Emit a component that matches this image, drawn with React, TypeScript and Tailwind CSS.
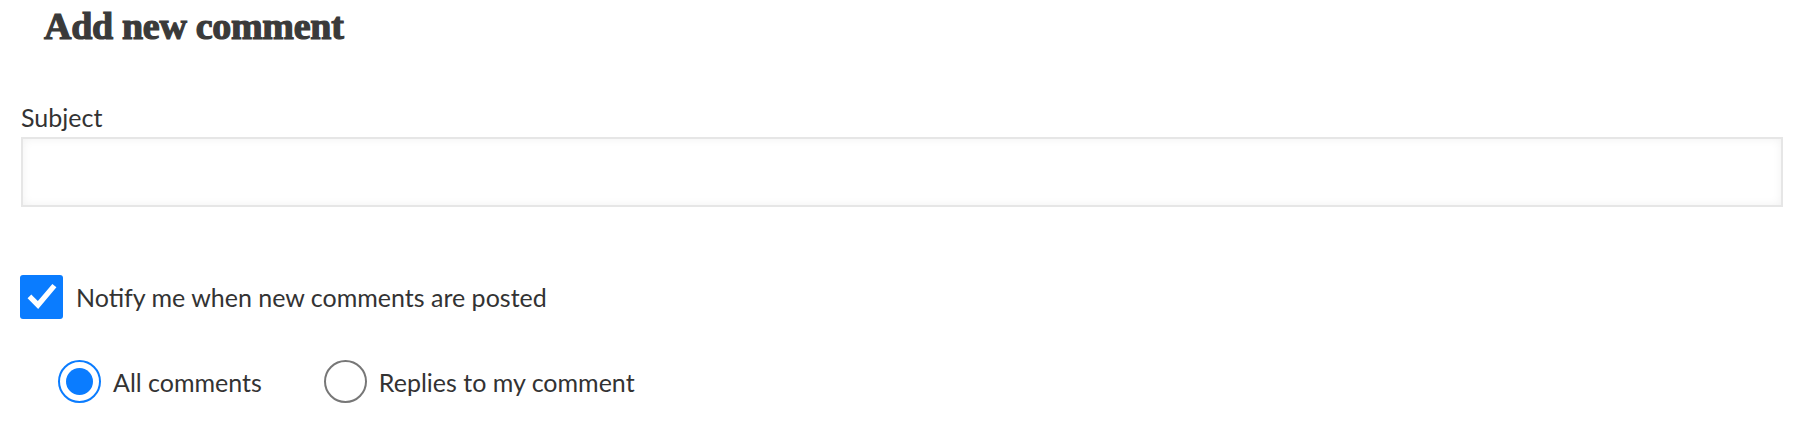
import { useState } from 'react';

// Comment form header: subject field, notify checkbox and notify-scope radios.
export default function App() {
  const [notify, setNotify] = useState(true);
  const [scope, setScope] = useState<'all' | 'replies'>('all');

  return (
    <div className="min-h-[428px] bg-white text-[#333] font-['Lato',sans-serif] pl-[21px] pr-[33px]">
      <h2 className="pl-[23px] pt-[2px] text-[38px] leading-[48px] font-bold text-[#3a3a3a] font-['Liberation_Serif',serif] [-webkit-text-stroke:1.2px_#3a3a3a] tracking-[-0.3px]">
        Add new comment
      </h2>

      <label className="block mt-[52px] text-[25px] leading-[30px]">Subject</label>
      <input
        type="text"
        className="mt-[5px] block w-full h-[70px] border-2 border-[#e6e6e6] bg-white shadow-[inset_0_0_10px_rgba(0,0,0,0.06)] outline-none px-3 text-[22px]"
      />

      <label className="flex items-center gap-[13px] mt-[68px] -ml-[1px] cursor-pointer">
        <button
          type="button"
          onClick={() => setNotify(n => !n)}
          className={`w-[43px] h-[44px] rounded-[3px] flex items-center justify-center ${notify ? 'bg-[#0a7cff]' : 'border-2 border-[#777] bg-white'}`}
        >
          {notify && (
            <svg viewBox="0 0 24 24" className="w-[32px] h-[32px]" fill="none" stroke="white" strokeWidth="4" strokeLinecap="square">
              <path d="M4 13l5 5L20 5" />
            </svg>
          )}
        </button>
        <span className="text-[25px] leading-[30px]">Notify me when new comments are posted</span>
      </label>

      <div className="flex items-center mt-[41px] ml-[37px] gap-[62px]">
        <label className="flex items-center gap-[12px] cursor-pointer" onClick={() => setScope('all')}>
          <span className={`w-[43px] h-[43px] rounded-full flex items-center justify-center border-2 ${scope === 'all' ? 'border-[#0a7cff]' : 'border-[#777]'}`}>
            {scope === 'all' && <span className="w-[27px] h-[27px] rounded-full bg-[#0a7cff]" />}
          </span>
          <span className="text-[25px] leading-[30px]">All comments</span>
        </label>
        <label className="flex items-center gap-[12px] cursor-pointer" onClick={() => setScope('replies')}>
          <span className={`w-[43px] h-[43px] rounded-full flex items-center justify-center border-2 ${scope === 'replies' ? 'border-[#0a7cff]' : 'border-[#777]'}`}>
            {scope === 'replies' && <span className="w-[27px] h-[27px] rounded-full bg-[#0a7cff]" />}
          </span>
          <span className="text-[25px] leading-[30px]">Replies to my comment</span>
        </label>
      </div>
    </div>
  );
}
